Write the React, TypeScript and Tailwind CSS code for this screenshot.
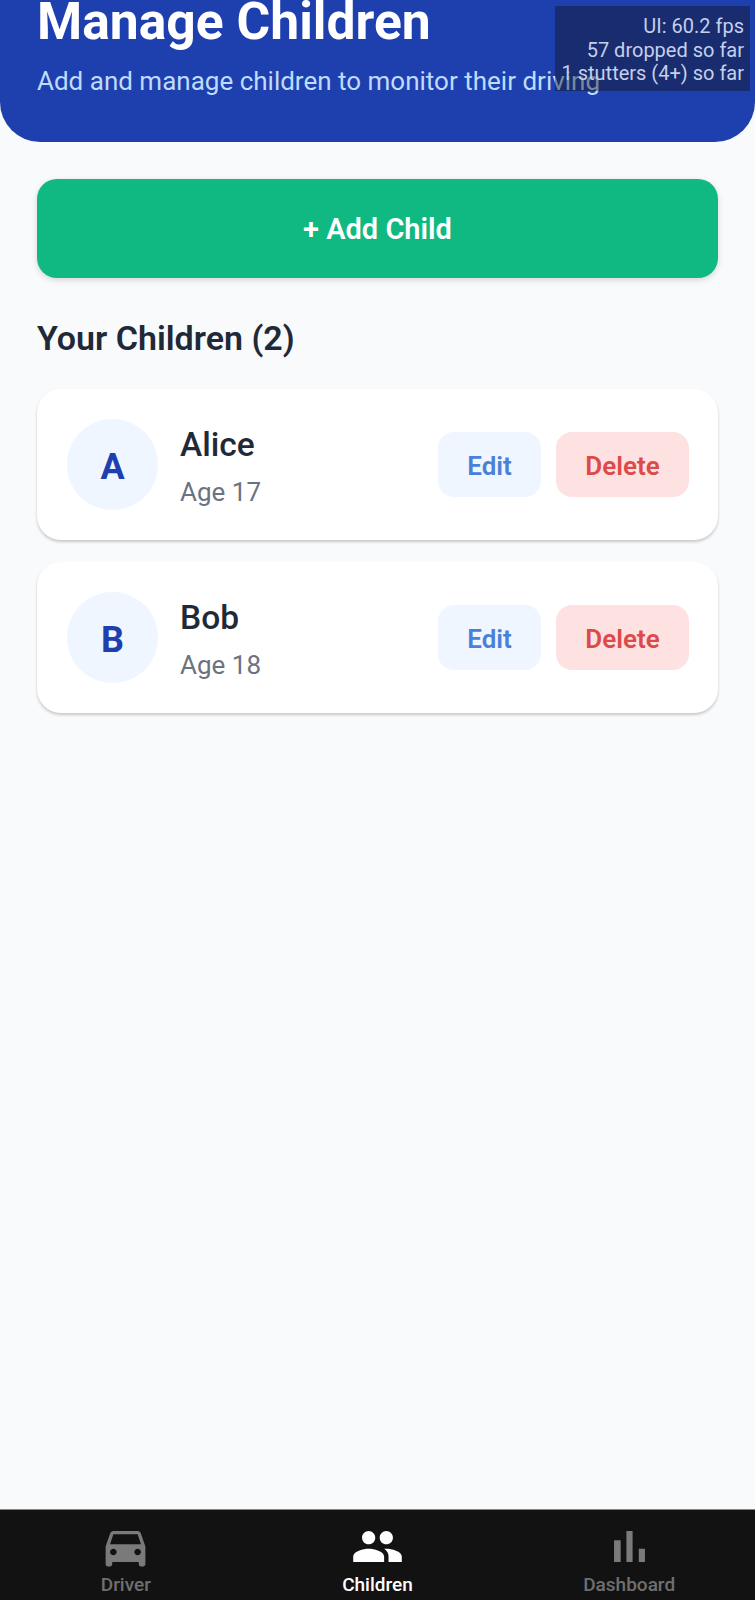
import { MdDirectionsCar, MdPeople } from "react-icons/md";

function BarChartIcon({ size, className }: { size: number; className?: string }) {
  return (
    <svg width={size} height={size} viewBox="0 0 24 24" fill="currentColor" className={className}>
      <path d="M5 9.2h3V19H5zM10.6 5h2.8v14h-2.8zm5.6 8H19v6h-2.8z" />
    </svg>
  );
}

const children = [
  { initial: "A", name: "Alice", age: "Age 17" },
  { initial: "B", name: "Bob", age: "Age 18" },
];

const tabs = [
  { label: "Driver", Icon: MdDirectionsCar, active: false },
  { label: "Children", Icon: MdPeople, active: true },
  { label: "Dashboard", Icon: BarChartIcon, active: false },
];

export default function App() {
  return (
    <div className="relative flex h-[1600px] w-[755px] flex-col overflow-hidden bg-[#f9fafb] font-['Roboto',sans-serif]">
      <header className="h-[142px] shrink-0 rounded-b-[40px] bg-[#1e40af] px-[37px]">
        <h1 className="text-[51.6px] leading-[44px] font-bold text-white">Manage Children</h1>
        <p className="mt-[21px] text-[26px] leading-[32px] whitespace-nowrap text-[#bfdbfe]">
          Add and manage children to monitor their driving
        </p>
      </header>

      <main className="flex flex-col px-[37px] pt-[37px]">
        <button className="flex h-[99px] items-center justify-center rounded-[20px] bg-[#10b981] pt-[2px] text-[29px] font-semibold text-white shadow-[0_2px_6px_rgba(0,0,0,0.15)]">
          + Add Child
        </button>

        <h2 className="mt-[39px] text-[34px] leading-[42px] font-semibold text-[#1f2937]">Your Children (2)</h2>

        <div className="mt-[30px] flex flex-col gap-[22px]">
          {children.map((c) => (
            <div
              key={c.name}
              className="flex h-[151px] items-center rounded-[24px] bg-white pr-[29px] pl-[30px] shadow-[0_2px_3px_rgba(0,0,0,0.2)]"
            >
              <div className="flex h-[91px] w-[91px] shrink-0 items-center justify-center rounded-full bg-[#eff6ff] pt-[5px] text-[36px] font-bold text-[#1e40af]">
                {c.initial}
              </div>
              <div className="ml-[22px] flex flex-1 flex-col pt-[3px]">
                <span className="text-[33.5px] leading-[44px] font-medium text-[#1f2937]">{c.name}</span>
                <span className="mt-[7px] text-[26px] leading-[36px] text-[#6b7280]">{c.age}</span>
              </div>
              <div className="flex gap-[15px]">
                <button className="h-[65px] w-[103px] rounded-[16px] bg-[#eff6ff] pt-[4px] text-[26px] font-semibold text-[#4a80d8]">
                  Edit
                </button>
                <button className="h-[65px] w-[133px] rounded-[16px] bg-[#fee2e2] pt-[4px] text-[26px] font-semibold text-[#dc4a4a]">
                  Delete
                </button>
              </div>
            </div>
          ))}
        </div>
      </main>

      <nav className="mt-auto grid h-[91px] grid-cols-3 border-t border-[#888888] bg-[#121212]">
        {tabs.map(({ label, Icon, active }) => (
          <div key={label} className="flex flex-col items-center pt-[10px]">
            <Icon size={53} className={active ? "text-white" : "text-[#7a7a7a]"} />
            <span
              className={`text-[19px] leading-[24px] font-medium ${active ? "text-white" : "text-[#6f6f6f]"}`}
            >
              {label}
            </span>
          </div>
        ))}
      </nav>

      <div className="absolute top-[6px] left-[555px] flex h-[85px] w-[195px] flex-col justify-center bg-[rgba(15,15,15,0.4)] pt-[4px] pr-[6px] text-right text-[20px] leading-[23.5px] whitespace-nowrap text-[#c5d0ea]">
        <span>UI: 60.2 fps</span>
        <span>57 dropped so far</span>
        <span>1 stutters (4+) so far</span>
      </div>
    </div>
  );
}
